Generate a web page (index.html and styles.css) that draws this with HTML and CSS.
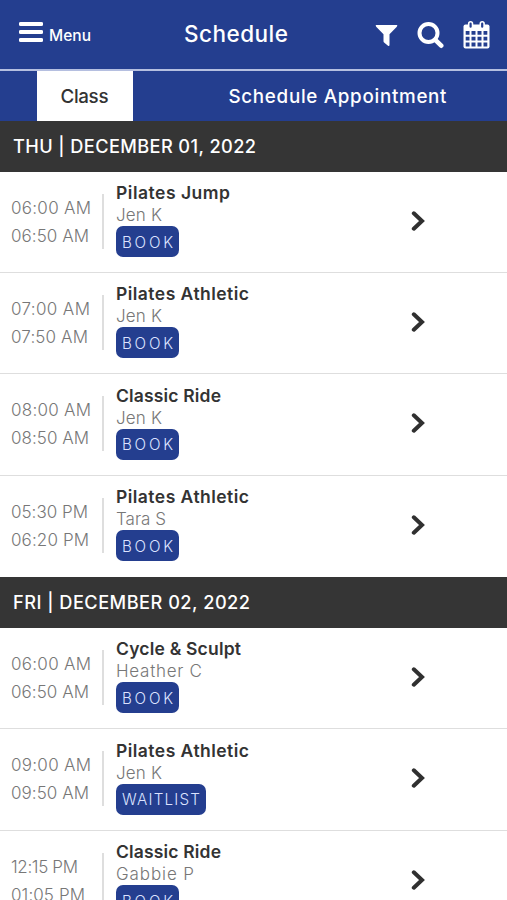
FILE: index.html
```html
<!DOCTYPE html>
<html lang="en">
<head>
    <meta charset="UTF-8">
    <meta name="viewport" content="width=device-width, initial-scale=1.0">
    <title>Schedule</title>
    <link rel="stylesheet" href="styles.css">
</head>
<body>
    <header class="top-bar">
        <a class="menu-btn">
            <svg width="24" height="20" viewBox="0 0 24 20"><path d="M1.500 2H22.500M1.500 10H22.500M1.500 18H22.500" stroke="#fff" stroke-width="3.800" stroke-linecap="round"/></svg>
            <span class="menu-text">Menu</span>
        </a>
        <h1><span class="title-text">Schedule</span></h1>
        <div class="actions">
            <svg class="filter" width="23" height="23" viewBox="0 0 23 23"><path d="M.8 1H22.200Q22.500 2.200 21.600 3L14.500 10.300V20.700Q14.500 22.500 13 21.700L9.100 18.500Q8.500 18 8.500 17V10.300L1.400 3Q.5 2.200 .8 1Z" fill="#fff"/></svg>
            <svg class="search" width="27" height="27" viewBox="0 0 27 27" fill="none" stroke="#fff"><circle cx="11.500" cy="11" r="9" stroke-width="4"/><path d="M18.300 17.800L24.200 23.700" stroke-width="4.600" stroke-linecap="round"/></svg>
            <svg class="calendar" width="27" height="28" viewBox="0 0 27 28">
                <rect x=".5" y="3.500" width="26" height="24" rx="2" fill="#fff"/>
                <path d="M2.700 10h3.800v3.800H2.700zM8.500 10h4v3.800h-4zM14.500 10h4v3.800h-4zM20.500 10h3.800v3.800h-3.800zM2.700 15.800h3.800v3.800H2.700zM8.500 15.800h4v3.800h-4zM14.500 15.800h4v3.800h-4zM20.500 15.800h3.800v3.800h-3.800zM2.700 21.600h3.800v3.800H2.700zM8.500 21.600h4v3.800h-4zM14.500 21.600h4v3.800h-4zM20.500 21.600h3.800v3.800h-3.800z" fill="#243e8f"/>
                <rect x="5.700" y=".8" width="3.800" height="6.800" rx="1.900" fill="#243e8f" stroke="#fff" stroke-width="1.600"/>
                <rect x="17.300" y=".8" width="3.800" height="6.800" rx="1.900" fill="#243e8f" stroke="#fff" stroke-width="1.600"/>
            </svg>
        </div>
    </header>

    <nav class="tabs">
        <a class="tab active"><span class="class-text">Class</span></a>
        <a class="tab appointment"><span class="appointment-text">Schedule Appointment</span></a>
    </nav>

    <main id="schedule"></main>

    <script src="script.js"></script>
</body>
</html>
```

FILE: styles.css
```css
* {
    box-sizing: border-box;
}
body {
    margin: 0;
    height: 900px;
    overflow: hidden;
    display: flex;
    flex-direction: column;
    font-family: Inter, "Open Sans", sans-serif;
    background-color: #fff;
    color: #333;
}
span {
    white-space: nowrap;
}
.top-bar {
    flex: none;
    height: 71px;
    display: grid;
    grid-template-columns: 165px 142px 200px;
    align-items: center;
    background-color: #243e8f;
    border-bottom: 2px solid #b5bfe0;
    color: #fff;
}
.menu-btn {
    display: flex;
    align-items: center;
    gap: 6px;
    padding: 0 0 5px 19px;
}
.menu-text {
    font-size: 15.5px;
    font-weight: 450;
    padding-top: 6px;
}
h1 {
    margin: 0;
    font-size: 22.5px;
    font-weight: 450;
    text-align: center;
    padding-bottom: 2px;
}
.actions {
    display: flex;
    align-items: center;
    justify-content: flex-end;
    padding-right: 17px;
}
.filter {
    margin-top: 1px;
}
.search {
    margin: 1px 19px 0 19px;
}
.tabs {
    flex: none;
    height: 49.6px;
    display: flex;
    padding-left: 36.5px;
    background-color: #243e8f;
    color: #fff;
    font-size: 18.8px;
    font-weight: 450;
}
.tab {
    display: flex;
    align-items: center;
    justify-content: center;
    padding-top: 1px;
}
.active {
    width: 96px;
    background-color: #fff;
    color: #333;
}
.appointment {
    margin-left: 96px;
}
#schedule {
    flex: none;
}
.day {
    height: 51px;
    display: flex;
    align-items: center;
    padding-left: 13px;
    padding-bottom: 1px;
    background-color: #353535;
    color: #fff;
    font-size: 18.2px;
    font-weight: 450;
}
.row {
    height: 101.35px;
    display: grid;
    grid-template-columns: 104px 307px 1fr;
    border-bottom: 1px solid #dedede;
}
.row.last {
    border-bottom: none;
}
.times {
    height: 55px;
    margin-top: 22px;
    padding-left: 11px;
    border-right: 2px solid #dedede;
    color: #777;
    font-size: 17px;
    font-weight: 300;
    line-height: 28px;
}
.times span {
    display: block;
}
.info {
    padding: 10.5px 0 0 12px;
    display: flex;
    flex-direction: column;
    align-items: flex-start;
    line-height: 22px;
}
.name {
    font-size: 17.5px;
    font-weight: 600;
}
.teacher {
    font-size: 17px;
    font-weight: 300;
    color: #777;
}
.btn {
    height: 31px;
    padding: 2px 6px 0;
    display: flex;
    align-items: center;
    border-radius: 7px;
    background-color: #243e8f;
    color: #dce3ff;
    font-size: 15.2px;
    font-weight: 300;
}
.arrow {
    margin-top: 39px;
}
```

FILE: script.js
```javascript
// name, teacher, start, end, button, then the drawn width of name and teacher
const days = [
    { title: 'THU | DECEMBER 01, 2022', width: 243, classes: [
        ['Pilates Jump', 'Jen K', '06:00 AM', '06:50 AM', 'BOOK', 114, 46],
        ['Pilates Athletic', 'Jen K', '07:00 AM', '07:50 AM', 'BOOK', 133, 46],
        ['Classic Ride', 'Jen K', '08:00 AM', '08:50 AM', 'BOOK', 105, 46],
        ['Pilates Athletic', 'Tara S', '05:30 PM', '06:20 PM', 'BOOK', 133, 50]
    ] },
    { title: 'FRI | DECEMBER 02, 2022', width: 237, classes: [
        ['Cycle & Sculpt', 'Heather C', '06:00 AM', '06:50 AM', 'BOOK', 125, 86],
        ['Pilates Athletic', 'Jen K', '09:00 AM', '09:50 AM', 'WAITLIST', 133, 46],
        ['Classic Ride', 'Gabbie P', '12:15 PM', '01:05 PM', 'BOOK', 105, 78]
    ] }
];

const timeWidths = {
    '06:00 AM': 80, '06:50 AM': 78, '07:00 AM': 79, '07:50 AM': 77,
    '08:00 AM': 80, '08:50 AM': 78, '05:30 PM': 77, '06:20 PM': 78,
    '09:00 AM': 80, '09:50 AM': 78, '12:15 PM': 67, '01:05 PM': 74
};

const arrow = '<svg class="arrow" width="14" height="20" viewBox="0 0 14 20"><path d="M2.800 2.300L11 10L2.800 17.700" fill="none" stroke="#303030" stroke-width="4" stroke-linecap="round" stroke-linejoin="miter"/></svg>';

// Add a span and remember how wide its text should be
function addText(parent, className, text, width) {
    const span = document.createElement('span');
    span.className = className;
    span.textContent = text;
    parent.appendChild(span);
    if (width) {
        track(span, width);
    }
}

// Spread the letters so that the label fills the given width
function track(span, width) {
    const range = document.createRange();
    range.selectNodeContents(span);
    const count = span.textContent.length;
    const spacing = (width - range.getBoundingClientRect().width) / (count - 1);
    span.style.letterSpacing = spacing + 'px';
    span.style.marginRight = -spacing + 'px';
}

const schedule = document.getElementById('schedule');

days.forEach(function(day) {
    const heading = document.createElement('div');
    heading.className = 'day';
    schedule.appendChild(heading);
    addText(heading, 'day-text', day.title, day.width);

    day.classes.forEach(function(item, index) {
        const row = document.createElement('div');
        row.className = 'row' + (index === day.classes.length - 1 ? ' last' : '');
        row.innerHTML = '<div class="times"></div><div class="info"></div>' + arrow;
        schedule.appendChild(row);

        const times = row.querySelector('.times');
        addText(times, 'start', item[2], timeWidths[item[2]]);
        addText(times, 'end', item[3], timeWidths[item[3]]);

        const info = row.querySelector('.info');
        addText(info, 'name', item[0], item[5]);
        addText(info, 'teacher', item[1], item[6]);
        const btn = document.createElement('div');
        btn.className = 'btn';
        info.appendChild(btn);
        addText(btn, 'btn-text', item[4], item[4] === 'BOOK' ? 51 : 78);
    });
});

track(document.querySelector('.menu-text'), 42);
track(document.querySelector('.title-text'), 104);
track(document.querySelector('.class-text'), 48);
track(document.querySelector('.appointment-text'), 218);
```
